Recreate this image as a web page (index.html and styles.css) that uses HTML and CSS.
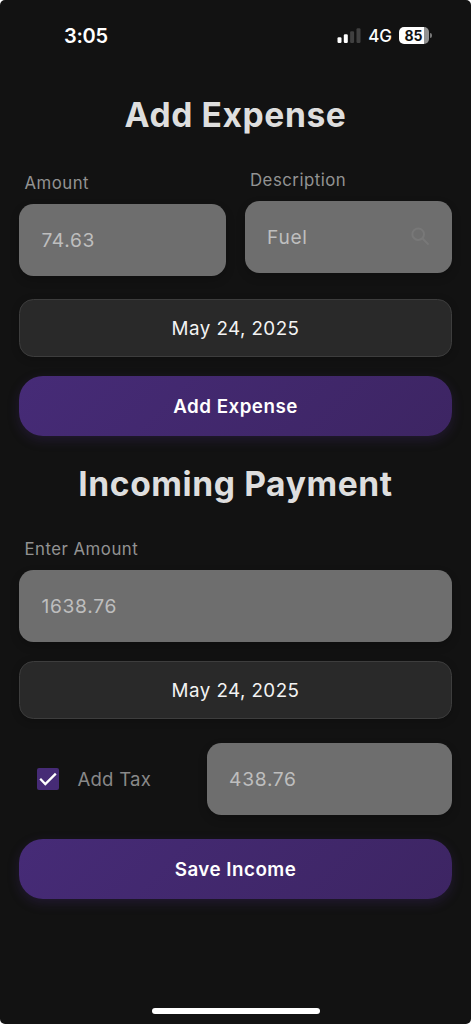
FILE: index.html
```html
<!DOCTYPE html>
<html lang="en">
<head>
<meta charset="utf-8">
<title>Add Expense</title>
<link rel="stylesheet" href="styles.css">
</head>
<body>
<div class="screen">
  <header class="status">
    <span class="time">3:05</span>
    <div class="indicators">
      <svg class="signal" width="24" height="16" viewBox="0 0 24 16">
        <rect x="0.5" y="9.3" width="4" height="5.6" rx="1.2" fill="#fff"/>
        <rect x="6.8" y="6.3" width="4" height="8.6" rx="1.2" fill="#fff"/>
        <rect x="13.1" y="3.3" width="4" height="11.6" rx="1.2" fill="#404040"/>
        <rect x="19.5" y="0.3" width="4" height="14.6" rx="1.2" fill="#404040"/>
      </svg>
      <span class="network">4G</span>
      <span class="battery">85</span>
      <span class="battery-tip"></span>
    </div>
  </header>
  <main class="content">
    <section>
      <h1 class="title">Add Expense</h1>
      <div class="pair">
        <div class="column column-low">
          <div class="label">Amount</div>
          <div class="field">74.63</div>
        </div>
        <div class="column">
          <div class="label">Description</div>
          <div class="field field-search">
            <span>Fuel</span>
            <svg class="search" width="22" height="22" viewBox="0 0 22 22" fill="none" stroke="#787878" stroke-width="2">
              <circle cx="8.2" cy="8.2" r="5.8"/>
              <path d="M12.3 12.3 18.6 18.6"/>
            </svg>
          </div>
        </div>
      </div>
      <div class="date">May 24, 2025</div>
      <div class="button">Add Expense</div>
    </section>
    <section>
      <h1 class="title title-second">Incoming Payment</h1>
      <div class="label">Enter Amount</div>
      <div class="field">1638.76</div>
      <div class="date date-income">May 24, 2025</div>
      <div class="tax-row">
        <div class="tax">
          <svg class="checkbox" width="22" height="22" viewBox="0 0 22 22">
            <rect width="22" height="22" rx="2" fill="#462b76"/>
            <path d="M3.2 10.8 8.3 16 18.8 5.6" fill="none" stroke="#fff" stroke-width="2.3"/>
          </svg>
          <span>Add Tax</span>
        </div>
        <div class="field tax-field">438.76</div>
      </div>
      <div class="button button-save">Save Income</div>
    </section>
  </main>
  <footer class="home"><span class="home-bar"></span></footer>
</div>
</body>
</html>
```
FILE: styles.css
```css
* {
  box-sizing: border-box;
}

body {
  margin: 0;
  background: #fff;
  font-family: Inter, "Liberation Sans", sans-serif;
}

.screen {
  display: flex;
  flex-direction: column;
  height: 1024px;
  border-radius: 5px;
  background: #121212;
  overflow: hidden;
}

.status {
  display: flex;
  justify-content: space-between;
  align-items: center;
  height: 71px;
  padding: 0 39px 0 64px;
  color: #fff;
}

.time {
  font-size: 20px;
  font-weight: 600;
  letter-spacing: -0.3px;
}

.indicators {
  display: flex;
  align-items: center;
}

.network {
  margin-left: 7px;
  font-size: 17px;
  font-weight: 500;
  line-height: 20px;
}

.battery {
  width: 30px;
  height: 17px;
  padding-right: 1px;
  margin-left: 7px;
  border-radius: 5px;
  background: linear-gradient(90deg, #fff 85%, #929292 85%);
  color: #111;
  font-size: 14px;
  font-weight: 700;
  line-height: 17px;
  text-align: center;
}

.battery-tip {
  width: 2px;
  height: 5px;
  margin-left: 1px;
  border-radius: 0 2px 2px 0;
  background: #777;
}

.content {
  flex: 1;
  padding: 24px 19.4px 0;
}

.title {
  margin: 0;
  color: #dedede;
  font-size: 33.6px;
  font-weight: 700;
  line-height: 40px;
  letter-spacing: 0.6px;
  text-align: center;
}

.title-second {
  margin: 28px 0 34.6px;
}

.pair {
  display: grid;
  grid-template-columns: 1fr 1fr;
  gap: 19px;
  margin-top: 34.6px;
}

.column-low {
  padding-top: 3.4px;
}

.label {
  padding-left: 5px;
  margin-bottom: 11.4px;
  color: #929292;
  font-size: 16.8px;
  line-height: 20px;
  letter-spacing: 0.5px;
}

.field {
  display: flex;
  align-items: center;
  height: 72px;
  padding: 0 22px;
  border-radius: 14.4px;
  background: #6e6e6e;
  box-shadow: 0 4px 10px rgba(0, 0, 0, 0.2);
  color: #bebebe;
  font-size: 19.2px;
  letter-spacing: 0.7px;
}

.field-search {
  justify-content: space-between;
  padding-right: 20px;
}

.date {
  display: flex;
  justify-content: center;
  align-items: center;
  height: 58px;
  margin-top: 22.8px;
  border: 1px solid #3d3d3d;
  border-radius: 14.4px;
  background: #292929;
  box-shadow: 0 2px 8px rgba(0, 0, 0, 0.2);
  color: #f3f3f3;
  font-size: 18.8px;
  letter-spacing: 0.43px;
}

.date-income {
  margin-top: 19px;
}

.button {
  display: flex;
  justify-content: center;
  align-items: center;
  height: 60px;
  margin-top: 19px;
  border-radius: 24px;
  background: linear-gradient(135deg, #462b77, #3d2563);
  box-shadow: 0 4px 12px rgba(70, 43, 119, 0.3);
  color: #fff;
  font-size: 18.8px;
  font-weight: 600;
  letter-spacing: 0.48px;
}

.button-save {
  margin-top: 24px;
}

.tax-row {
  display: flex;
  justify-content: space-between;
  align-items: center;
  margin-top: 24px;
}

.tax {
  display: flex;
  align-items: center;
  gap: 18.5px;
  padding-left: 17.5px;
  color: #888;
  font-size: 18.6px;
  letter-spacing: 0.25px;
}

.tax-field {
  width: 244.5px;
}

.home {
  display: flex;
  justify-content: center;
  padding-bottom: 10px;
}

.home-bar {
  width: 168px;
  height: 6px;
  border-radius: 3px;
  background: #fff;
}
```
